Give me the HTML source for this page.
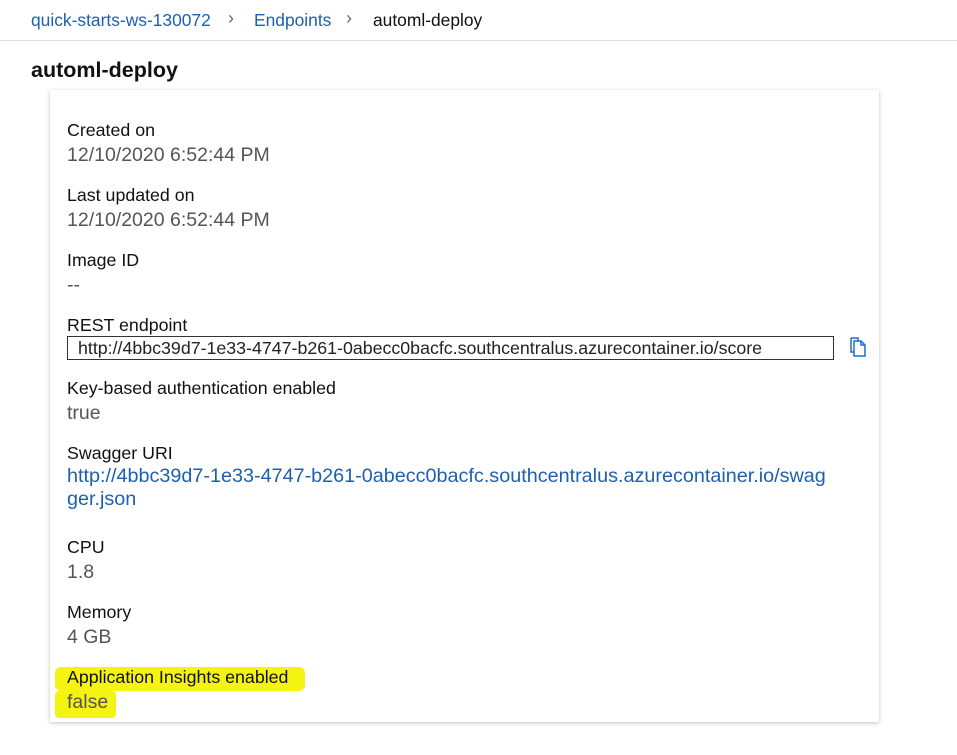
<!DOCTYPE html>
<html><head><style>
body{margin:0;width:957px;height:755px;background:#fff;font-family:"Segoe UI","Liberation Sans",sans-serif;position:relative;overflow:hidden}
.t{position:absolute;white-space:nowrap;font-size:17px;line-height:22px}
.l{color:#111;font-size:17.8px}
.v{color:#555;font-size:19.5px}
</style></head><body>
<div class="t" style="left:31px;top:9px;color:#1d5fb0;font-size:17.4px">quick-starts-ws-130072</div>
<div class="t" style="left:228px;top:7px;color:#666;font-size:18px">&#x203A;</div>
<div class="t" style="left:254px;top:9px;color:#1d5fb0;font-size:17.4px">Endpoints</div>
<div class="t" style="left:346px;top:7px;color:#666;font-size:18px">&#x203A;</div>
<div class="t" style="left:373px;top:9px;color:#111;font-size:17.4px">automl-deploy</div>
<div style="position:absolute;left:0;top:40px;width:957px;height:1px;background:#ddd"></div>
<div class="t" style="left:31px;top:57px;font-size:21.5px;line-height:26px;color:#111;font-weight:600">automl-deploy</div>
<div style="position:absolute;left:50px;top:90px;width:829px;height:632px;background:#fff;box-shadow:0 1px 4px rgba(0,0,0,.25)"></div>
<div style="position:absolute;left:55px;top:667px;width:250px;height:24px;background:#f4f410;border-radius:6px"></div>
<div style="position:absolute;left:55px;top:691px;width:61px;height:27px;background:#f4f410;border-radius:4px"></div>
<div class="t l" style="left:67px;top:119px">Created on</div>
<div class="t v" style="left:67px;top:144px">12/10/2020 6:52:44 PM</div>
<div class="t l" style="left:67px;top:184px">Last updated on</div>
<div class="t v" style="left:67px;top:209px">12/10/2020 6:52:44 PM</div>
<div class="t l" style="left:67px;top:249px">Image ID</div>
<div class="t v" style="left:67px;top:274px">--</div>
<div class="t l" style="left:67px;top:314px">REST endpoint</div>
<div style="position:absolute;left:67px;top:336px;width:765px;height:22px;border:1px solid #333"></div>
<div class="t" style="left:78px;top:337px;font-size:17.8px;color:#222">http://4bbc39d7-1e33-4747-b261-0abecc0bacfc.southcentralus.azurecontainer.io/score</div>
<svg style="position:absolute;left:849px;top:337px" width="18" height="20" viewBox="0 0 18 20"><path d="M2 1h7v3M2 1v14h3" fill="none" stroke="#1d6fd0" stroke-width="1.5"/><path d="M5 4h7l4 4v11H5z M12 4v4h4" fill="none" stroke="#1d6fd0" stroke-width="1.5"/></svg>
<div class="t l" style="left:67px;top:377px">Key-based authentication enabled</div>
<div class="t v" style="left:67px;top:402px">true</div>
<div class="t l" style="left:67px;top:442px">Swagger URI</div>
<div class="t" style="left:67px;top:465px;color:#1d5fb0;line-height:23px;font-size:19.8px">http://4bbc39d7-1e33-4747-b261-0abecc0bacfc.southcentralus.azurecontainer.io/swag<br>ger.json</div>
<div class="t l" style="left:67px;top:536px">CPU</div>
<div class="t v" style="left:67px;top:561px">1.8</div>
<div class="t l" style="left:67px;top:601px">Memory</div>
<div class="t v" style="left:67px;top:626px">4 GB</div>
<div class="t l" style="left:67px;top:666px">Application Insights enabled</div>
<div class="t v" style="left:67px;top:691px">false</div>
</body></html>
